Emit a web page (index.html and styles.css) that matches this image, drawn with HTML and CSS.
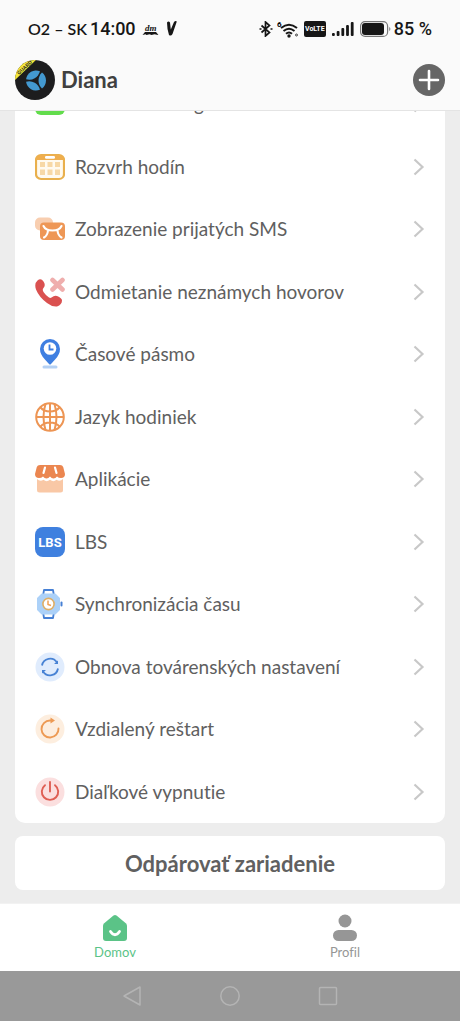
FILE: index.html
```
<!DOCTYPE html>
<html lang="sk">
<head>
<meta charset="utf-8">
<meta name="viewport" content="width=device-width, initial-scale=1">
<title>Diana</title>
<link rel="stylesheet" href="styles.css">
</head>
<body>
<svg class="defs" aria-hidden="true"><symbol id="chevron" viewBox="0 0 12 18"><path d="M1.500 1.500L9.500 9l-8 7.500" fill="none" stroke="#c8c8c8" stroke-width="2.200"/></symbol></svg>
<div class="screen">
  <div class="status">
    <div class="status-side">
      <span class="carrier">O2 – SK</span>
      <span class="clock">14:00</span>
      <svg class="dm" width="17" height="14" viewBox="0 0 17 14" fill="#161616"><text x="3" y="9" class="dm-text">dm</text><path d="M3 10h11l2.500 3-4-.8-3 .8-2-.8-3 .8-1-.8L.5 13z"/></svg>
      <svg class="vee" width="12" height="17" viewBox="0 0 12 17"><path d="M1 2.500Q2.500.5 4 2.500l.8 7L8 2q1.500-1.500 2.800-.5L6.500 14q-1.500 2.500-3.500 1Q1 9 1 2.500z" fill="#161616"/></svg>
    </div>
    <div class="status-side">
      <svg width="14" height="16" viewBox="0 0 14 16" fill="none" stroke="#161616" stroke-width="1.700"><path d="M2.500 4.500l8 7-4 3.500V1l4 3.500-8 7"/><path d="M0.500 8h2M11.500 8h2"/></svg>
      <svg class="wifi" width="22" height="18" viewBox="0 0 22 18"><text x="0" y="7" class="six">6</text><g fill="none" stroke="#161616" stroke-width="2"><path d="M4 8q8-6.500 16 0M6.500 11q5.500-4.500 11 0M9 13.800q3-2.600 6 0"/></g><circle cx="12" cy="16" r="1.700" fill="#161616"/><circle cx="19.500" cy="15" r="1" fill="none" stroke="#161616" stroke-width="0.800"/></svg>
      <span class="volte">VoLTE</span>
      <svg class="signal" width="22" height="14" viewBox="0 0 22 14" fill="#161616"><rect y="11" width="2.800" height="3" rx="1"/><rect x="4.700" y="9" width="2.800" height="5" rx="1"/><rect x="9.400" y="6" width="2.800" height="8" rx="1"/><rect x="14.100" y="3" width="2.800" height="11" rx="1"/><rect x="18.800" width="2.800" height="14" rx="1"/></svg>
      <svg class="battery" width="31" height="16" viewBox="0 0 31 16"><rect x="0.600" y="0.600" width="27" height="14.800" rx="4.500" fill="none" stroke="#777" stroke-width="1.200"/><rect x="2" y="2" width="22" height="12" rx="3" fill="#161616"/><path d="M29 6v4q1.500-.5 1.500-2T29 6z" fill="#999"/></svg>
      <span class="percent">85 %</span>
    </div>
  </div>
  <header class="header">
    <svg width="40" height="40" viewBox="0 0 40 40"><defs><clipPath id="face"><circle cx="20" cy="20" r="20"/></clipPath></defs><g clip-path="url(#face)"><rect width="40" height="40" fill="#1d1d1e"/><path d="M-1 21L22-1H-2z" fill="#f5e83a"/></g><text class="guard" transform="translate(4 15) rotate(-43)">GUARD</text><g fill="#4399d0"><path id="petal" d="M27 12.500A10 10 0 0 1 27 28.500A11 11 0 0 1 27 12.500z"/><path d="M27 12.500A10 10 0 0 1 27 28.500A11 11 0 0 1 27 12.500z" transform="rotate(120 21 20.500)"/><path d="M27 12.500A10 10 0 0 1 27 28.500A11 11 0 0 1 27 12.500z" transform="rotate(240 21 20.500)"/></g></svg>
    <h1 class="name">Diana</h1>
    <button class="add" aria-label="Pridať"><svg width="32" height="32" viewBox="0 0 32 32"><circle cx="16" cy="16" r="16" fill="#666"/><path d="M16 7v18M7 16h18" stroke="#fff" stroke-width="2.600" stroke-linecap="round"/></svg></button>
  </header>
  <main class="content">
    <nav class="card" aria-label="Nastavenia">
      <a class="row" href="#"><svg class="icon" viewBox="0 0 30 30"><rect y="5" width="30" height="21" rx="6" fill="#62dc4c"/><circle cx="15" cy="13" r="5" fill="none" stroke="#fff" stroke-width="2.500"/></svg><span class="label">Vzdialená fotografia</span><svg class="chev"><use href="#chevron"/></svg></a>
      <a class="row" href="#"><svg class="icon" viewBox="0 0 30 30"><rect x="1" y="3" width="28" height="24" rx="5" fill="#fffaf0" stroke="#e9b04d" stroke-width="2.200"/><path d="M1 8V7q1-4 5-4h18q4 0 5 4v1z" fill="#efae4e"/><rect x="10" y="4" width="10" height="2.800" rx="1.200" fill="#fff"/><g fill="#f7d8a6"><path d="M5 10h5v5H5zM12.500 10h5v5h-5zM20 10h5v5h-5zM5 17.500h5V23H5zM12.500 17.500h5V23h-5zM20 17.500h5V23h-5z"/></g></svg><span class="label">Rozvrh hodín</span><svg class="chev"><use href="#chevron"/></svg></a>
      <a class="row" href="#"><svg class="icon" viewBox="0 0 30 30"><rect y="3.500" width="18" height="13" rx="5" fill="#f8ceb0"/><rect x="5" y="8.500" width="25" height="17.500" rx="4" fill="#ee9756"/><path d="M8.500 12q2 4.500 9 4.500t9-4.500M9 23.500q3.500-2 4-7M26.500 23.500q-3.500-2-4-7" fill="none" stroke="#fff" stroke-width="2.100" stroke-linecap="round"/></svg><span class="label">Zobrazenie prijatých SMS</span><svg class="chev"><use href="#chevron"/></svg></a>
      <a class="row" href="#"><svg class="icon" viewBox="0 0 30 30"><path d="M2.500 3.500Q6 .8 8.500 4.500T8.500 11q-1.500 1.500 0 4t5.500 5.500q1.500.8 2.500 0 3-2.500 5.500-1.500 5 2 5 4.500 0 4-5 6-5 .5-10-3.500-8-6-11-13.500-2-6 1.500-9z" fill="#da5150"/><path d="M17.500 3l10 9.500M27.500 3l-10 9.500" stroke="#efaead" stroke-width="4.600" stroke-linecap="round"/></svg><span class="label">Odmietanie neznámych hovorov</span><svg class="chev"><use href="#chevron"/></svg></a>
      <a class="row" href="#"><svg class="icon" viewBox="0 0 30 30"><rect x="7.500" y="26.500" width="15" height="3" rx="1.500" fill="#b5d1f4"/><path d="M15 0a10 10 0 0 1 10 10q0 5-4.500 10L16 25q-1 1-2 0l-4.500-5Q5 15 5 10A10 10 0 0 1 15 0z" fill="#3f7fe1"/><circle cx="15" cy="9.500" r="6.300" fill="#fff"/><path d="M14.500 5.500V10.500h4" fill="none" stroke="#3f7fe1" stroke-width="1.800"/></svg><span class="label">Časové pásmo</span><svg class="chev"><use href="#chevron"/></svg></a>
      <a class="row" href="#"><svg class="icon" viewBox="0 0 30 30"><g fill="none" stroke="#ed9554" stroke-width="2"><circle cx="15" cy="15" r="13.800"/><path d="M15 1v28M1 15h28M5.500 5.500q3.500 4 9.500 4t9.500-4M5.500 24.500q3.500-4 9.500-4t9.500 4M10.500 2Q6.500 15 10.500 28M19.500 2q4 13 0 26"/></g></svg><span class="label">Jazyk hodiniek</span><svg class="chev"><use href="#chevron"/></svg></a>
      <a class="row" href="#"><svg class="icon" viewBox="0 0 30 30"><path d="M2 13h26v13q0 2.500-2.500 2.500h-21Q2 28.500 2 26z" fill="#f9c8a6"/><path d="M2 12h26v3q-3 3-6.500.8-3 2.800-6.500 0-3.500 2.800-6.500 0Q5 18 2 15z" fill="#fff"/><path d="M5 1h20q2.500 0 3.200 2l1.800 7q0 4-4 4-2.500 0-4-1.500-1.500 2-3.500 2T15 12.500Q13.500 14.500 11.500 14.500T8 12.500Q6.500 14 4 14 0 14 0 10l1.800-7Q2.500 1 5 1z" fill="#eb8650"/><path d="M10 3.500L8.500 9M20 3.500L21.500 9" stroke="#fff" stroke-width="2.200" stroke-linecap="round"/></svg><span class="label">Aplikácie</span><svg class="chev"><use href="#chevron"/></svg></a>
      <a class="row" href="#"><svg class="icon" viewBox="0 0 30 30"><rect width="30" height="30" rx="8" fill="#3f80df"/><text class="lbs" x="15" y="20" text-anchor="middle">LBS</text></svg><span class="label">LBS</span><svg class="chev"><use href="#chevron"/></svg></a>
      <a class="row" href="#"><svg class="icon" viewBox="0 0 30 30"><path d="M8 7l1-6h9l1 6M8 23l1 6h9l1-6" fill="none" stroke="#4680d5" stroke-width="1.800" stroke-linejoin="round"/><path d="M7 5.500h13l4 4v11l-4 4H7l-4-4v-11z" fill="#acd1f8" stroke="#acd1f8" stroke-width="2" stroke-linejoin="round"/><rect x="25.500" y="12.500" width="2" height="5" rx="1" fill="#4680d5"/><circle cx="13.500" cy="15" r="5.600" fill="#fff" stroke="#dfae66" stroke-width="1.600"/><path d="M13 11.500V15.500l3 1" fill="none" stroke="#f0a055" stroke-width="1.500"/></svg><span class="label">Synchronizácia času</span><svg class="chev"><use href="#chevron"/></svg></a>
      <a class="row" href="#"><svg class="icon" viewBox="0 0 30 30"><circle cx="15" cy="15" r="14.500" fill="#e0ecfd"/><path d="M7 13.500a8.200 8.200 0 0 1 15-3M23 16.500a8.200 8.200 0 0 1-15 3" fill="none" stroke="#4782d4" stroke-width="1.800"/><path d="M23 8.500v3.500h-4zM7 21.500V18h4z" fill="#4782d4"/></svg><span class="label">Obnova továrenských nastavení</span><svg class="chev"><use href="#chevron"/></svg></a>
      <a class="row" href="#"><svg class="icon" viewBox="0 0 30 30"><circle cx="15" cy="15" r="14.500" fill="#fdeedf"/><path d="M23.500 14.500a8.500 8.500 0 1 1-8.500-8h2" fill="none" stroke="#ed9a54" stroke-width="1.900" stroke-linecap="round"/><path d="M15.500 3.500l4.500 3-4.500 3z" fill="#ed9a54"/></svg><span class="label">Vzdialený reštart</span><svg class="chev"><use href="#chevron"/></svg></a>
      <a class="row" href="#"><svg class="icon" viewBox="0 0 30 30"><circle cx="15" cy="15" r="14.500" fill="#fbdfdf"/><path d="M15 5v9.500M10 8.200a8.200 8.200 0 1 0 10 0" fill="none" stroke="#df5f54" stroke-width="1.900" stroke-linecap="round"/></svg><span class="label">Diaľkové vypnutie</span><svg class="chev"><use href="#chevron"/></svg></a>
    </nav>
    <button class="unpair">Odpárovať zariadenie</button>
  </main>
  <nav class="tabs" aria-label="Hlavná navigácia">
    <a class="tab active" href="#"><svg width="24" height="28" viewBox="0 0 24 28"><path d="M10.500 1.600q1.500-1.200 3 0l9.300 7.600q1.200 1 1.200 2.800v12q0 3-3 3H3q-3 0-3-3V12q0-1.800 1.200-2.800z" fill="#5bc387"/><path d="M7.500 17.500q4.500 6.500 9 0" fill="none" stroke="#fff" stroke-width="2.800" stroke-linecap="round"/></svg><span>Domov</span></a>
    <a class="tab" href="#"><svg width="24" height="28" viewBox="0 0 24 28" fill="#969696"><circle cx="12" cy="7" r="6.500"/><rect y="16" width="24" height="11" rx="5.500"/></svg><span>Profil</span></a>
  </nav>
  <div class="system">
    <button aria-label="Späť"><svg width="20" height="20" viewBox="0 0 20 20"><path d="M18 1v18L2 10z"/></svg></button>
    <button aria-label="Domovská obrazovka"><svg width="20" height="20" viewBox="0 0 20 20"><circle cx="10" cy="10" r="9.200"/></svg></button>
    <button aria-label="Prehľad"><svg width="20" height="20" viewBox="0 0 20 20"><rect x="1.500" y="1.500" width="17" height="17" rx="1"/></svg></button>
  </div>
</div>
</body>
</html>
```
FILE: styles.css
```
* { box-sizing: border-box; }
body { margin: 0; background: #ededed; font-family: Lato, "Noto Sans", sans-serif; font-variant-ligatures: none; color: #606060; }
button { border: 0; padding: 0; background: none; font: inherit; color: inherit; }
a { color: inherit; text-decoration: none; }
svg { display: block; flex: none; }
.defs { display: none; }
.screen { display: flex; flex-direction: column; min-height: 100vh; }
.status { display: flex; justify-content: space-between; align-items: center; height: 57px; padding: 0 28px; background: #fafafa; color: #161616; z-index: 1; }
.status-side { display: flex; align-items: center; font-size: 18px; font-weight: 500; white-space: nowrap; }
.carrier { margin-right: 3px; font-size: 16px; font-weight: 600; }
.clock, .percent { font-family: Roboto, sans-serif; }
.dm { margin-left: 6px; }
.vee { margin-left: 7px; }
.dm-text { font: italic bold 9px "Liberation Serif", serif; }
.wifi { margin-left: 4px; }
.six { font: bold 8px Roboto, sans-serif; }
.volte { width: 22px; margin-left: 5px; border-radius: 2px; background: #161616; color: #fff; font: bold 7px/16px Roboto, sans-serif; text-align: center; }
.signal { margin-left: 6px; }
.battery { margin-left: 6px; }
.percent { margin-left: 3px; }
.header { display: flex; align-items: center; height: 54px; padding: 0 15px 8px; border-bottom: 1px solid #e4e4e4; background: #fafafa; z-index: 1; }
.guard { font: bold 5px "Liberation Sans", sans-serif; fill: #222; }
.name { flex: 1; margin: 0 0 0 6px; color: #404040; font-size: 22px; font-weight: 700; line-height: 28px; }
.content { display: flex; flex: 1; flex-direction: column; gap: 13px; padding: 0 15px 13px; }
.card { display: grid; flex: 1; grid-auto-rows: 1fr; margin-top: -38px; border-radius: 10px; background: #fff; }
.row { display: flex; align-items: center; min-height: 60px; padding: 0 20px; }
.icon { width: 30px; height: 30px; }
.label { flex: 1; margin-left: 10px; font-size: 19px; line-height: 24px; }
.lbs { font: bold 13px Roboto, sans-serif; fill: #fff; }
.chev { width: 12px; height: 18px; }
.unpair { height: 54px; border-radius: 8px; background: #fff; font-size: 22px; font-weight: 700; }
.tabs { display: flex; height: 68px; border-top: 1px solid #f2f2f2; background: #fff; }
.tab { display: flex; flex: 1; flex-direction: column; align-items: center; gap: 2px; padding-top: 10px; color: #969696; font-size: 13px; line-height: 16px; }
.active { color: #5bc387; }
.system { display: flex; justify-content: center; align-items: center; gap: 78px; height: 50px; background: #999; }
.system svg { fill: none; stroke: #b4b4b4; stroke-width: 1.5px; stroke-linejoin: round; }
```
